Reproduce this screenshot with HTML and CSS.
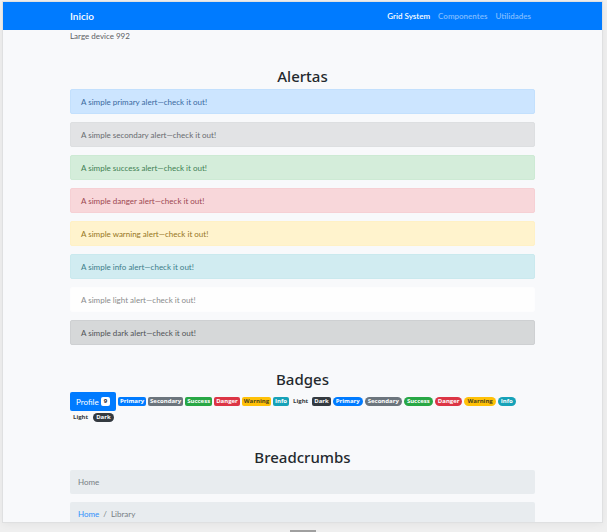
FILE: index.html
```html
<!DOCTYPE html>
<html lang="es">
<head>
<meta charset="utf-8">
<meta name="viewport" content="width=device-width, initial-scale=1">
<title>Componentes</title>
<link rel="stylesheet" href="styles.css">
</head>
<body>
<div class="viewport">
  <nav class="navbar">
    <div class="container navbar-inner">
      <a class="brand" href="#">Inicio</a>
      <div class="nav-links">
        <a class="nav-link active" href="#">Grid System</a>
        <a class="nav-link" href="#">Componentes</a>
        <a class="nav-link" href="#">Utilidades</a>
      </div>
    </div>
  </nav>
  <main class="container">
    <p class="device">Large device 992</p>
    <section>
      <h2>Alertas</h2>
      <div class="stack">
        <div class="alert alert-primary" role="alert">A simple primary alert—check it out!</div>
        <div class="alert alert-secondary" role="alert">A simple secondary alert—check it out!</div>
        <div class="alert alert-success" role="alert">A simple success alert—check it out!</div>
        <div class="alert alert-danger" role="alert">A simple danger alert—check it out!</div>
        <div class="alert alert-warning" role="alert">A simple warning alert—check it out!</div>
        <div class="alert alert-info" role="alert">A simple info alert—check it out!</div>
        <div class="alert alert-light" role="alert">A simple light alert—check it out!</div>
        <div class="alert alert-dark" role="alert">A simple dark alert—check it out!</div>
      </div>
    </section>
    <section>
      <h2>Badges</h2>
      <div class="badges">
        <button class="btn" type="button">Profile <span class="badge count">9</span></button>
        <span class="badge primary">Primary</span>
        <span class="badge secondary">Secondary</span>
        <span class="badge success">Success</span>
        <span class="badge danger">Danger</span>
        <span class="badge warning">Warning</span>
        <span class="badge info">Info</span>
        <span class="badge light">Light</span>
        <span class="badge dark">Dark</span>
        <span class="badge pill primary">Primary</span>
        <span class="badge pill secondary">Secondary</span>
        <span class="badge pill success">Success</span>
        <span class="badge pill danger">Danger</span>
        <span class="badge pill warning">Warning</span>
        <span class="badge pill info">Info</span>
        <span class="badge pill light">Light</span>
        <span class="badge pill dark">Dark</span>
      </div>
    </section>
    <section>
      <h2>Breadcrumbs</h2>
      <div class="stack">
        <ol class="breadcrumb"><li>Home</li></ol>
        <ol class="breadcrumb"><li><a href="#">Home</a></li><li>Library</li></ol>
      </div>
    </section>
  </main>
</div>
<div class="handle"></div>
</body>
</html>
```

FILE: styles.css
```css
* {
  box-sizing: border-box;
}

body {
  position: relative;
  height: 100vh;
  margin: 0;
  padding: 2px 5px 10px 3px;
  overflow: hidden;
  background: #efefef;
  color: #5c6064;
  font-family: "Segoe UI", Lato, "Noto Sans", sans-serif;
  font-size: 8px;
  line-height: 12px;
}

.viewport {
  height: 100%;
  overflow: hidden;
  background: #f8f9fb;
  box-shadow: 0 0 0 1px #dfe0e1, 0 2px 8px rgba(0, 0, 0, 0.06);
}

.container {
  max-width: 1140px;
  margin: 0 auto;
  padding: 0 67px;
}

a {
  color: #2f90fb;
  text-decoration: none;
}

.navbar {
  background: #007bff;
}

.navbar-inner {
  display: flex;
  align-items: center;
  justify-content: space-between;
  height: 28px;
}

.brand {
  color: #fff;
  font-size: 10px;
  font-weight: 600;
}

.nav-links {
  display: flex;
  gap: 8px;
  padding-right: 4px;
}

.nav-link {
  color: #80bdff;
  font-weight: 600;
}

.nav-link.active {
  color: #fff;
}

.device {
  margin: 0;
}

section {
  margin-top: 24px;
}

h2 {
  margin: 0 0 3px;
  color: #24292e;
  font-family: "Segoe UI", "Noto Sans", sans-serif;
  font-size: 15px;
  font-weight: 500;
  line-height: 20px;
  text-align: center;
}

.stack {
  display: grid;
  gap: 8px;
}

.alert {
  padding: 6px 10px 5px;
  border: 1px solid;
  border-radius: 2px;
}

.alert-primary {
  background: #cce5ff;
  border-color: #c3e0fd;
  color: #3a69a0;
}

.alert-secondary {
  background: #e2e3e5;
  border-color: #dddfe1;
  color: #686b6f;
}

.alert-success {
  background: #d4edda;
  border-color: #cdead4;
  color: #418053;
}

.alert-danger {
  background: #f8d7da;
  border-color: #f6d0d4;
  color: #9c4751;
}

.alert-warning {
  background: #fff3cd;
  border-color: #fff1c6;
  color: #967523;
}

.alert-info {
  background: #d1ecf1;
  border-color: #cae9ee;
  color: #3c7c89;
}

.alert-light {
  background: #fefefe;
  border-color: #fdfdfe;
  color: #8a8b8c;
}

.alert-dark {
  background: #d6d8d9;
  border-color: #ced0d2;
  color: #505357;
}

.badges {
  display: flex;
  flex-wrap: wrap;
  align-items: center;
  gap: 2px;
  padding-bottom: 1px;
}

.btn {
  display: flex;
  align-items: center;
  gap: 2px;
  height: 19px;
  padding: 0 6px;
  border: 0;
  border-radius: 2px;
  background: #007bff;
  color: #fff;
  font: inherit;
}

.badge {
  padding: 0 2px;
  border-radius: 2px;
  color: #fff;
  font-family: "Segoe UI", "Open Sans", sans-serif;
  font-size: 6px;
  font-weight: 700;
  line-height: 9px;
}

.pill {
  padding: 0 3px;
  border-radius: 5px;
}

.count {
  padding: 0 3px;
  background: #fff;
  color: #212529;
}

.primary {
  background: #007bff;
}

.secondary {
  background: #6c757d;
}

.success {
  background: #28a745;
}

.danger {
  background: #dc3545;
}

.warning {
  background: #ffc107;
  color: #4a421f;
}

.info {
  background: #17a2b8;
}

.light {
  background: #f8f9fa;
  color: #34383c;
}

.dark {
  background: #343a40;
}

.breadcrumb {
  display: flex;
  margin: 0;
  padding: 6px 8px;
  border-radius: 2px;
  background: #e8ecef;
  color: #777e84;
  list-style: none;
}

.breadcrumb li + li::before {
  content: "/";
  padding: 0 4px;
}

.handle {
  position: absolute;
  bottom: 0;
  left: 50%;
  width: 26px;
  height: 2px;
  margin-left: -14px;
  background: #a0a0a0;
}
```
